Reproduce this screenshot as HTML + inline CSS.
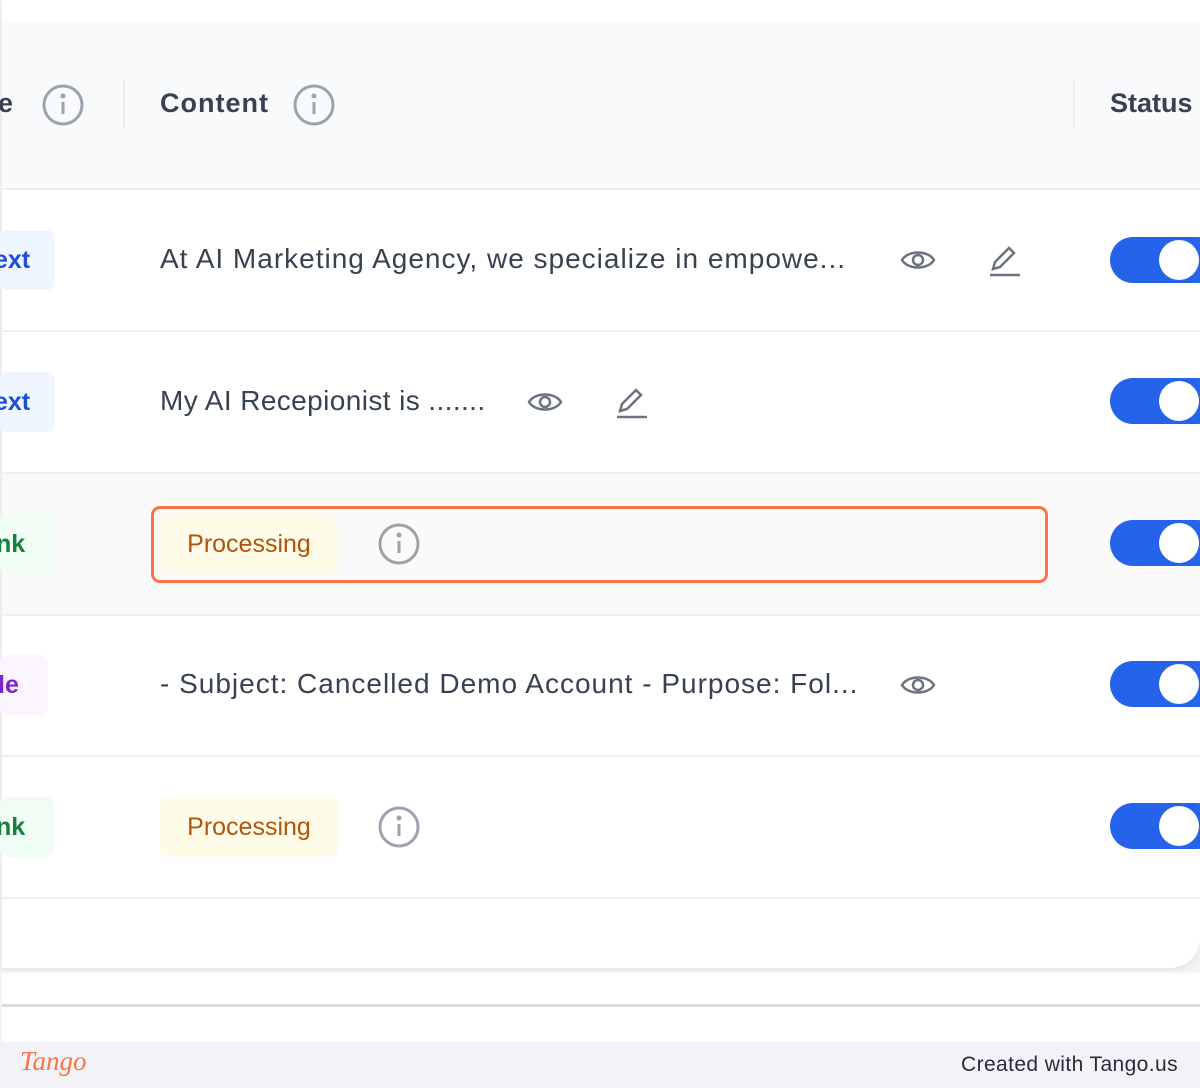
<!DOCTYPE html><html><head><style>
body{margin:0;width:1200px;height:1088px;background:#f3f3f6;font-family:"Liberation Sans",sans-serif;position:relative;overflow:hidden}
.card{position:absolute;left:2px;top:0;width:1198px;height:968px;background:#fff;border-bottom-right-radius:30px;box-shadow:0 3px 6px rgba(0,0,0,.06)}
.abs{position:absolute}
.hdr{left:2px;top:22px;width:1198px;height:166px;background:#f9fafb;border-bottom:2px solid #eceef1}
.row{left:2px;width:1198px;height:140px;border-bottom:2px solid #eef0f2}
.t{position:absolute;font-size:28px;color:#374151;white-space:nowrap;letter-spacing:1px}
.h{font-weight:bold;color:#374151;font-size:27px}
.badge{position:absolute;height:60px;border-radius:8px;font-size:25px;line-height:60px;font-weight:bold}
.tog{position:absolute;left:1110px;width:110px;height:46px;border-radius:23px;background:#2563eb}
.tog:after{content:"";position:absolute;left:49px;top:3px;width:40px;height:40px;border-radius:50%;background:#fff}
.proc{position:absolute;left:160px;width:178px;height:60px;background:#fefce8;color:#b45309;font-size:25px;line-height:60px;text-align:center;border-radius:6px}
</style></head><body>
<div class="card"></div>
<div class="abs hdr"></div>
<div class="abs row" style="top:190px"></div>
<div class="abs row" style="top:332px"></div>
<div class="abs row" style="top:474px;background:#fafafa"></div>
<div class="abs row" style="top:615px"></div>
<div class="abs row" style="top:757px"></div>
<div class="abs" style="left:123px;top:80px;width:2px;height:48px;background:#eceef1"></div>
<div class="abs" style="left:1073px;top:80px;width:2px;height:48px;background:#eceef1"></div>
<div class="t h" style="left:-2px;top:88px">e</div>
<svg class="abs" style="left:41px;top:83px" width="44" height="44" viewBox="0 0 44 44" fill="none" stroke="#9ca3af" stroke-width="3"><circle cx="22" cy="22" r="19"/><path d="M22 19v12"/><circle cx="22" cy="13" r="1" fill="#9ca3af"/></svg>
<div class="t h" style="left:160px;top:88px">Content</div>
<svg class="abs" style="left:292px;top:83px" width="44" height="44" viewBox="0 0 44 44" fill="none" stroke="#9ca3af" stroke-width="3"><circle cx="22" cy="22" r="19"/><path d="M22 19v12"/><circle cx="22" cy="13" r="1" fill="#9ca3af"/></svg>
<div class="t h" style="left:1110px;top:88px;letter-spacing:0">Status</div>

<div class="badge" style="left:0;top:230px;width:55px;background:#eff6ff;color:#1d4ed8;text-indent:-6px">ext</div>
<div class="t" style="left:160px;top:243px">At AI Marketing Agency, we specialize in empowe...</div>
<svg class="abs" style="left:899px;top:245px" width="38" height="30" viewBox="0 0 38 30" fill="none" stroke="#6b7280" stroke-width="2.5"><path d="M3 15C9 5 29 5 35 15C29 25 9 25 3 15Z"/><circle cx="19" cy="15" r="5"/></svg>
<svg class="abs" style="left:988px;top:243px" width="34" height="34" viewBox="0 0 34 34" fill="none" stroke="#6b7280" stroke-width="2.5"><path d="M5 26l2-7L21 5l5 5-14 14z"/><path d="M2 32h30"/></svg>
<div class="tog" style="top:237px"></div>

<div class="badge" style="left:0;top:372px;width:55px;background:#eff6ff;color:#1d4ed8;text-indent:-6px">ext</div>
<div class="t" style="left:160px;top:385px;letter-spacing:0.4px">My AI Recepionist is .......</div>
<svg class="abs" style="left:526px;top:387px" width="38" height="30" viewBox="0 0 38 30" fill="none" stroke="#6b7280" stroke-width="2.5"><path d="M3 15C9 5 29 5 35 15C29 25 9 25 3 15Z"/><circle cx="19" cy="15" r="5"/></svg>
<svg class="abs" style="left:615px;top:385px" width="34" height="34" viewBox="0 0 34 34" fill="none" stroke="#6b7280" stroke-width="2.5"><path d="M5 26l2-7L21 5l5 5-14 14z"/><path d="M2 32h30"/></svg>
<div class="tog" style="top:378px"></div>

<div class="badge" style="left:0;top:514px;width:54px;background:#f0fdf4;color:#15803d;text-indent:-4px">nk</div>
<div class="proc" style="top:514px">Processing</div>
<svg class="abs" style="left:377px;top:522px" width="44" height="44" viewBox="0 0 44 44" fill="none" stroke="#9ca3af" stroke-width="3"><circle cx="22" cy="22" r="19"/><path d="M22 19v12"/><circle cx="22" cy="13" r="1" fill="#9ca3af"/></svg>
<div class="abs" style="left:151px;top:506px;width:891px;height:71px;border:3px solid #f97346;border-radius:9px"></div>
<div class="tog" style="top:520px"></div>

<div class="badge" style="left:0;top:655px;width:48px;background:#faf5ff;color:#7e22ce;text-indent:-2px">le</div>
<div class="t" style="left:160px;top:668px">- Subject: Cancelled Demo Account - Purpose: Fol...</div>
<svg class="abs" style="left:899px;top:670px" width="38" height="30" viewBox="0 0 38 30" fill="none" stroke="#6b7280" stroke-width="2.5"><path d="M3 15C9 5 29 5 35 15C29 25 9 25 3 15Z"/><circle cx="19" cy="15" r="5"/></svg>
<div class="tog" style="top:661px"></div>

<div class="badge" style="left:0;top:797px;width:54px;background:#f0fdf4;color:#15803d;text-indent:-4px">nk</div>
<div class="proc" style="top:797px">Processing</div>
<svg class="abs" style="left:377px;top:805px" width="44" height="44" viewBox="0 0 44 44" fill="none" stroke="#9ca3af" stroke-width="3"><circle cx="22" cy="22" r="19"/><path d="M22 19v12"/><circle cx="22" cy="13" r="1" fill="#9ca3af"/></svg>
<div class="tog" style="top:803px"></div>

<div class="abs" style="left:2px;top:972px;width:1198px;height:70px;background:#fff;border-top:2px solid #fafafa"></div>
<div class="abs" style="left:2px;top:1004px;width:1198px;height:3px;background:#d9d9d9"></div>
<div class="abs" style="left:0;top:1042px;width:1200px;height:46px;background:#f3f2f7"></div>
<div class="abs" style="left:20px;top:1046px;font-family:'Liberation Serif',serif;font-style:italic;font-size:27px;color:#f97346">Tango</div>
<div class="abs" style="left:961px;top:1053px;font-size:21px;color:#2d2a3e;letter-spacing:0.4px">Created with Tango.us</div>
</body></html>
